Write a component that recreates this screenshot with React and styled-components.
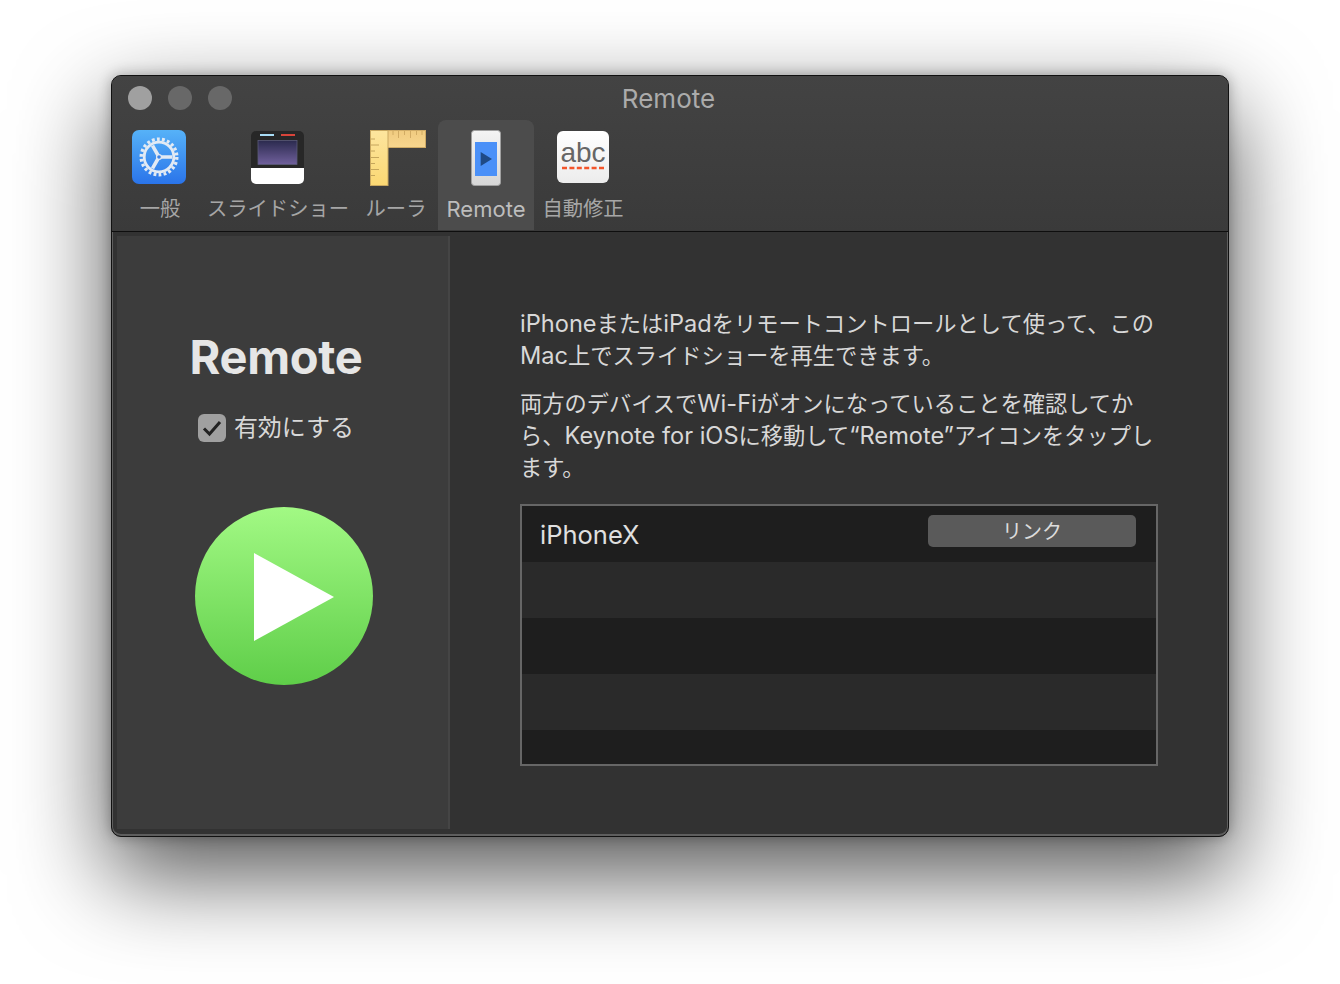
import React from 'react';
import styled, { createGlobalStyle } from 'styled-components';

const FONT = `Inter, "Noto Sans CJK JP", "Liberation Sans", sans-serif`;

const GlobalStyle = createGlobalStyle`
    html, body { margin:0; padding:0; background:#fff; overflow:hidden; }
    body { font-family:${FONT}; }
`;

const GearIcon = () => (
    <svg width="54" height="54" viewBox="0 0 54 54">
        <defs>
            <linearGradient id="gearBg" x1="0" y1="0" x2="0" y2="1">
                <stop offset="0" stopColor="#56b2f8" />
                <stop offset="1" stopColor="#2a74ea" />
            </linearGradient>
        </defs>
        <rect width="54" height="54" rx="7" fill="url(#gearBg)" />
        <circle cx="27" cy="27" r="17.8" fill="none" stroke="#e2eaf4" strokeWidth="3.4" strokeDasharray="2.8 2.28" />
        <circle cx="27" cy="27" r="14.8" fill="none" stroke="#e2eaf4" strokeWidth="2.8" />
        <path d="M27 27 L40 27 M27 27 L20.5 38.3 M27 27 L20.5 15.7" stroke="#e2eaf4" strokeWidth="3.6" />
        <circle cx="27" cy="27" r="2.4" fill="#3b82e6" stroke="#e2eaf4" strokeWidth="1.2" />
    </svg>
);

const SlideIcon = () => (
    <svg width="54" height="53" viewBox="0 0 54 53">
        <defs>
            <linearGradient id="slideBg" x1="0" y1="0" x2="0" y2="1">
                <stop offset="0" stopColor="#2b2a4e" />
                <stop offset="1" stopColor="#70609c" />
            </linearGradient>
            <clipPath id="slideClip"><rect x="0" y="0" width="53" height="53" rx="5" /></clipPath>
        </defs>
        <g clipPath="url(#slideClip)">
            <rect width="54" height="37" fill="#272727" />
            <rect y="37" width="54" height="16" fill="#fff" />
            <rect x="9" y="3" width="14" height="2" fill="#a8dcf5" />
            <rect x="30" y="3" width="14" height="2" fill="#d8443a" />
            <rect x="7" y="9.500" width="39" height="24" fill="url(#slideBg)" stroke="#5a5a78" strokeWidth="0.8" />
        </g>
    </svg>
);

const RulerIcon = () => (
    <svg width="56" height="56" viewBox="0 0 56 56">
        <defs>
            <linearGradient id="rulerTop" x1="0" y1="0" x2="0" y2="1">
                <stop offset="0" stopColor="#f0cb80" />
                <stop offset="1" stopColor="#f8d68e" />
            </linearGradient>
            <linearGradient id="rulerSide" x1="0" y1="0" x2="0" y2="1">
                <stop offset="0" stopColor="#fde59e" />
                <stop offset="1" stopColor="#fbd873" />
            </linearGradient>
        </defs>
        <rect x="17" y="0.500" width="38.500" height="17" fill="url(#rulerTop)" stroke="#cfab66" />
        <path d="M23 1v4M28.500 1v7M34.500 1v4M40.500 1v7M46.500 1v4M52 1v4" stroke="#c9a25c" strokeWidth="0.8" />
        <rect x="0.500" y="0.500" width="17.500" height="55" fill="url(#rulerSide)" stroke="#c9a860" />
        <path d="M1 9h4M1 15h8M1 21h4M1 27.500h8M1 33.500h4M1 39.500h8M1 45.500h4" stroke="#b89850" strokeWidth="0.8" />
    </svg>
);

const PhoneIcon = () => (
    <svg width="30" height="56" viewBox="0 0 30 56">
        <defs>
            <linearGradient id="phoneBg" x1="0" y1="0" x2="0" y2="1">
                <stop offset="0" stopColor="#f4f4f4" />
                <stop offset="1" stopColor="#d6d6d6" />
            </linearGradient>
        </defs>
        <rect x="0.500" y="0.500" width="29" height="55" rx="3" fill="url(#phoneBg)" stroke="#a0a0a0" />
        <rect x="4" y="12" width="22" height="34" fill="#4a90f8" />
        <path d="M9.700 22 L21 29 L9.700 36 Z" fill="#1f4a86" />
    </svg>
);

const AbcIcon = () => (
    <svg width="52" height="52" viewBox="0 0 52 52">
        <defs>
            <linearGradient id="abcBg" x1="0" y1="0" x2="0" y2="1">
                <stop offset="0" stopColor="#fff" />
                <stop offset="1" stopColor="#ececec" />
            </linearGradient>
        </defs>
        <rect width="52" height="52" rx="6" fill="url(#abcBg)" />
        <text x="26" y="31" textAnchor="middle" fontFamily='"Liberation Sans", sans-serif' fontSize="28" fill="#666">abc</text>
        <path d="M5 37H47" stroke="#f4552a" strokeWidth="2.600" strokeDasharray="5 2.400" />
    </svg>
);

const TABS = [
    { label: '一般', width: 84, icon: <GearIcon />, left: -2 },
    { label: 'スライドショー', width: 152, icon: <SlideIcon />, top: 1 },
    { label: 'ルーラ', width: 84, icon: <RulerIcon />, left: 4 },
    { label: 'Remote', width: 96, icon: <PhoneIcon />, active: true, latin: true },
    { label: '自動修正', width: 98, icon: <AbcIcon />, top: 1 },
];

const App = () => {
    return (
        <Page>
            <GlobalStyle />
            <Window>
                <Header>
                    <TitleBar>
                        <Lights>
                            <Light $on />
                            <Light />
                            <Light />
                        </Lights>
                        <Title>Remote</Title>
                    </TitleBar>
                    <Toolbar>
                        {TABS.map((tab) => (
                            <Tab key={tab.label} $width={tab.width} $active={tab.active}>
                                <TabIcon $left={tab.left} $top={tab.top}>{tab.icon}</TabIcon>
                                <TabLabel $latin={tab.latin} $active={tab.active}>{tab.label}</TabLabel>
                            </Tab>
                        ))}
                    </Toolbar>
                </Header>
                <Body>
                    <Side>
                        <SideHead>
                            <Heading>Remote</Heading>
                            <CheckRow>
                                <CheckBox>
                                    <svg width="22" height="22" viewBox="0 0 22 22">
                                        <path d="M3 11.500 L8.500 17 L19 5" fill="none" stroke="#222" strokeWidth="3" />
                                    </svg>
                                </CheckBox>
                                <CheckLabel>有効にする</CheckLabel>
                            </CheckRow>
                        </SideHead>
                        <PlayButton>
                            <svg width="80" height="88" viewBox="0 0 80 88">
                                <path d="M0 0 L80 44 L0 88 Z" fill="#fff" />
                            </svg>
                        </PlayButton>
                    </Side>
                    <Main>
                        <Para>
                            <Lat>iPhone</Lat>または<Lat>iPad</Lat>をリモートコントロールとして使って、この<br />
                            <Lat>Mac</Lat>上でスライドショーを再生できます。
                        </Para>
                        <Para>
                            両方のデバイスで<Lat>Wi-Fi</Lat>がオンになっていることを確認してか<br />
                            ら、<Lat>Keynote for iOS</Lat>に移動して<Lat>“Remote”</Lat>アイコンをタップし<br />
                            ます。
                        </Para>
                        <List>
                            <Row>
                                <DeviceName>iPhoneX</DeviceName>
                                <LinkButton>リンク</LinkButton>
                            </Row>
                            <Row $odd />
                            <Row />
                            <Row $odd />
                            <Row $last />
                        </List>
                    </Main>
                </Body>
            </Window>
        </Page>
    );
};

export default App;

const Page = styled.div`
    width:1340px;
    height:984px;
    padding:75px 0 0 111px;
    box-sizing:border-box;
    overflow:hidden;
    background:#fff;
`;

const Window = styled.div`
    width:1118px;
    height:762px;
    box-sizing:border-box;
    border:1px solid #111;
    border-radius:10px;
    background:#323232;
    overflow:hidden;
    box-shadow:inset 0 -2px 0 0 #5e5e5e, inset 0 0 0 1px #5e5e5e, 0 36px 92px 3px rgba(0,0,0,.66), 0 0 14px rgba(0,0,0,.3);
    display:flex;
    flex-direction:column;
`;

const Header = styled.div`
    height:156px;
    flex-shrink:0;
    box-sizing:border-box;
    background:linear-gradient(#434343, #3a3a3a);
    border-bottom:1px solid #0e0e0e;
`;

const TitleBar = styled.div`
    height:44px;
    display:flex;
    align-items:center;
    justify-content:center;
    position:relative;
`;

const Lights = styled.div`
    position:absolute;
    left:16px;
    top:10px;
    display:flex;
    gap:16px;
`;

const Light = styled.div`
    width:24px;
    height:24px;
    border-radius:50%;
    background:${(p) => (p.$on ? '#a0a0a0' : '#686868')};
`;

const Title = styled.div`
    font-size:26px;
    color:#ababab;
    margin:0 3px 0 0;
`;

const Toolbar = styled.div`
    display:flex;
    padding-left:6px;
`;

const Tab = styled.div`
    width:${(p) => p.$width}px;
    height:110px;
    box-sizing:border-box;
    padding-top:10px;
    display:flex;
    flex-direction:column;
    align-items:center;
    border-radius:8px 8px 0 0;
    background:${(p) => (p.$active ? '#4c4c4c' : 'transparent')};
`;

const TabIcon = styled.div`
    height:56px;
    box-sizing:border-box;
    padding-top:${(p) => p.$top || 0}px;
    margin-left:${(p) => p.$left || 0}px;
    display:flex;
    align-items:flex-start;
    justify-content:center;
    svg { display:block; }
`;

const TabLabel = styled.div`
    margin-top:8px;
    font-size:${(p) => (p.$latin ? '22px' : '20.300px')};
    line-height:30px;
    color:${(p) => (p.$active ? '#bdbdbd' : '#a6a6a6')};
    white-space:nowrap;
`;

const Body = styled.div`
    flex:1;
    display:flex;
    padding:4px 0 7px 5px;
    min-height:0;
`;

const Side = styled.div`
    width:333px;
    flex-shrink:0;
    box-sizing:border-box;
    background:#3c3c3c;
    border-right:2px solid #454545;
    display:flex;
    flex-direction:column;
    align-items:center;
    padding:91px 0 0 2px;
`;

const SideHead = styled.div`
    display:flex;
    flex-direction:column;
    align-items:center;
    padding-right:15px;
`;

const Heading = styled.h1`
    margin:0;
    font-size:47px;
    line-height:60px;
    font-weight:700;
    letter-spacing:-.3px;
    color:#e6e6e6;
`;

const CheckRow = styled.div`
    display:flex;
    align-items:center;
    gap:8px;
    margin-top:25px;
`;

const CheckBox = styled.div`
    width:28px;
    height:28px;
    border-radius:6px;
    background:#a0a0a0;
    display:flex;
    align-items:center;
    justify-content:center;
`;

const CheckLabel = styled.span`
    font-size:24px;
    line-height:32px;
    color:#d8d8d8;
`;

const PlayButton = styled.div`
    width:178px;
    height:178px;
    margin-top:63px;
    border-radius:50%;
    background:linear-gradient(#a2f984, #5fce49);
    display:flex;
    align-items:center;
    justify-content:center;
    padding:2px 0 0 20px;
    box-sizing:border-box;
    flex-shrink:0;
`;

const Main = styled.div`
    flex:1;
    box-sizing:border-box;
    padding:72px 70px 0 70px;
`;

const Para = styled.p`
    margin:0 0 16px;
    font-size:22.250px;
    line-height:32px;
    color:#d8d8d8;
    white-space:nowrap;
`;

const Lat = styled.span`
    font-size:23.600px;
`;

const List = styled.div`
    width:638px;
    height:262px;
    box-sizing:border-box;
    margin-top:20px;
    border:2px solid #666;
    display:flex;
    flex-direction:column;
`;

const Row = styled.div`
    height:${(p) => (p.$last ? '34px' : '56px')};
    flex-shrink:0;
    box-sizing:border-box;
    background:${(p) => (p.$odd ? '#2a2a2a' : '#1e1e1e')};
    display:flex;
    justify-content:space-between;
    padding:9px 20px 0 18px;
`;

const DeviceName = styled.span`
    font-size:25.500px;
    line-height:40px;
    color:#e0e0e0;
`;

const LinkButton = styled.button`
    width:208px;
    height:32px;
    border:0;
    border-radius:5px;
    background:#5a5a5a;
    color:#dcdcdc;
    font-family:${FONT};
    font-size:20px;
    line-height:28px;
    padding:2px 0 0;
`;
